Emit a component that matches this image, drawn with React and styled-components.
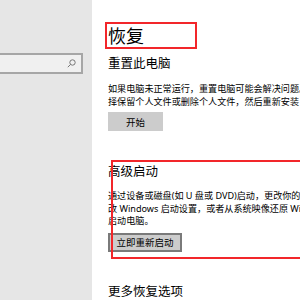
import styled, { createGlobalStyle } from 'styled-components'

const GlobalStyle = createGlobalStyle`
    html, body {
        margin: 0;
        padding: 0;
        background: #fff;
        overflow: hidden;
    }
    body {
        font-family: "Noto Sans", "Noto Sans CJK SC", sans-serif;
        color: #000;
    }
`

const Page = styled.div`
    display: flex;
    width: 300px;
    height: 300px;
    overflow: hidden;
`

const Nav = styled.div`
    width: 92px;
    flex-shrink: 0;
    background: #e6e6e6;
    padding-top: 53px;
    box-sizing: border-box;
`

const SearchBox = styled.div`
    width: 83px;
    height: 21px;
    box-sizing: border-box;
    border: 2px solid #a6a6a6;
    border-left: none;
    background: #f0f0f0;
    display: flex;
    justify-content: flex-end;
    align-items: center;
    padding-right: 5px;
`

const Main = styled.div`
    position: relative;
    flex: 1;
    padding: 23px 0 0 16px;
    white-space: nowrap;
    font-family: "Noto Sans CJK SC", sans-serif;
`

const Title = styled.h1`
    margin: 0;
    font-size: 18px;
    line-height: 24px;
    font-weight: 400;
`

const Heading = styled.h2`
    margin: ${p => p.$top}px 0 0;
    font-size: 12.5px;
    line-height: 16px;
    font-weight: 400;
`

const Desc = styled.p`
    margin: ${p => p.$top}px 0 0;
    font-size: 9.1px;
    line-height: 12.5px;
    font-family: "Noto Sans", "Noto Sans CJK SC", sans-serif;
`

const Button = styled.button`
    display: block;
    margin-top: ${p => p.$top}px;
    width: ${p => p.$width}px;
    height: 19px;
    padding: 0;
    background: #cccccc;
    border: ${p => (p.$focused ? '2px solid #7a7a7a' : 'none')};
    font-family: "Noto Sans CJK SC", sans-serif;
    font-size: 9.5px;
    color: #000;
`

const Mark = styled.div`
    position: absolute;
    left: ${p => p.$left}px;
    top: ${p => p.$top}px;
    width: ${p => p.$width}px;
    height: ${p => p.$height}px;
    border: 2px solid #f2262a;
    box-sizing: border-box;
    pointer-events: none;
`

const SearchIcon = () => (
    <svg width="9" height="9" viewBox="0 0 9 9" fill="none" stroke="#777" strokeWidth="1">
        <circle cx="5.5" cy="3.5" r="2.7" />
        <path d="M3.6 5.4 L0.8 8.2" />
    </svg>
)

export default function App() {
    return (
        <Page>
            <GlobalStyle />
            <Nav>
                <SearchBox>
                    <SearchIcon />
                </SearchBox>
            </Nav>
            <Main>
                <Title>恢复</Title>
                <Heading $top={8}>重置此电脑</Heading>
                <Desc $top={12}>
                    如果电脑未正常运行，重置电脑可能会解决问题。你可以选<br />
                    择保留个人文件或删除个人文件，然后重新安装 Windows。
                </Desc>
                <Button $top={4} $width={55}>开始</Button>

                <Heading $top={32}>高级启动</Heading>
                <Desc $top={11}>
                    通过设备或磁盘(如 U 盘或 DVD)启动，更改你的电脑固件设置，更<br />
                    改 Windows 启动设置，或者从系统映像还原 Windows。这将重新<br />
                    启动电脑。
                </Desc>
                <Button $top={5} $width={74} $focused>立即重新启动</Button>

                <Heading $top={31}>更多恢复选项</Heading>

                <Mark $left={13} $top={22} $width={92} $height={27} />
                <Mark $left={19} $top={160} $width={220} $height={99} />
            </Main>
        </Page>
    )
}
